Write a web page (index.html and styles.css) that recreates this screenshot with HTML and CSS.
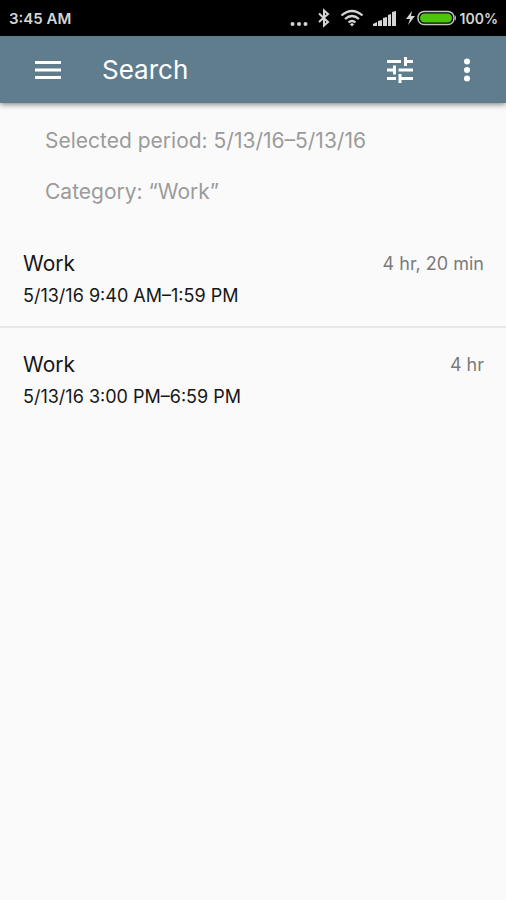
FILE: index.html
```html
<!DOCTYPE html>
<html lang="en">
<head>
<meta charset="utf-8">
<meta name="viewport" content="width=device-width, initial-scale=1">
<title>Search</title>
<link rel="stylesheet" href="styles.css">
</head>
<body>
<div class="status">
  <time class="clock">3:45 AM</time>
  <div class="indicators">
    <svg class="dots" width="18" height="24" viewBox="0 0 18 24" fill="currentColor"><circle cx="2.5" cy="18" r="2"/><circle cx="9" cy="18" r="2"/><circle cx="15.5" cy="18" r="2"/></svg>
    <svg class="bluetooth" width="14" height="24" viewBox="0 0 14 24" fill="none" stroke="currentColor" stroke-width="2"><path d="M2 7.500l9 8.500-4 3.500V4.500l4 3.500L2 16"/></svg>
    <svg class="wifi" width="24" height="24" viewBox="0 0 24 24" fill="none" stroke="currentColor" stroke-width="2.3"><path d="M1.500 9.500Q12 .5 22.500 9.500M5 13Q12 7 19 13M8.500 16.500Q12 13.500 15.500 16.500"/><path d="M9.800 18.200Q12 16.500 14.200 18.200L12 20.500z" fill="currentColor" stroke="none"/></svg>
    <svg class="signal" width="24" height="24" viewBox="0 0 24 24" fill="currentColor"><path d="M0 20v-2l4-2v4zM5 20v-5l4-1v6zM10 20v-8l4-1v9zM15 20V9l3-1v12zM19 20V6l4-1v15z"/></svg>
    <svg class="battery" width="50" height="24" viewBox="0 0 50 24"><path d="M6 5L0 13h4l-2 6 7-9H5z" fill="#d5d5d5"/><rect x="12" y="5.500" width="36" height="13" rx="6" fill="#050505" stroke="#c4c4c4" stroke-width="1.500"/><path d="M49 9q2 3 0 6z" fill="#c4c4c4"/><rect x="14" y="7.500" width="32" height="9" rx="4.500" fill="#4bc60a"/></svg>
    <span class="percent">100%</span>
  </div>
</div>
<header class="bar">
  <button class="icon" aria-label="Open menu"><svg width="26" height="26" viewBox="0 0 26 26" fill="currentColor"><path d="M0 4h26v3H0zM0 11.500h26v3H0zM0 19h26v3H0z"/></svg></button>
  <h1>Search</h1>
  <button class="icon" aria-label="Filter"><svg width="26" height="26" viewBox="0 0 26 26" fill="currentColor"><path d="M0 3h14v3H0zM17 0h3v3h6v3h-6v3h-3zM0 11.500h6V8.500h3v9H6v-3H0zM11.500 11.500H26v3H11.500zM0 20h9v3H0zM11.500 17h3v3H26v3H14.500v3h-3z"/></svg></button>
  <button class="icon more" aria-label="More options"><svg width="8" height="26" viewBox="0 0 8 26" fill="currentColor"><circle cx="4" cy="4.500" r="3"/><circle cx="4" cy="13" r="3"/><circle cx="4" cy="21.500" r="3"/></svg></button>
</header>
<main>
  <section class="filters">
    <p>Selected period: 5/13/16–5/13/16</p>
    <p>Category: “Work”</p>
  </section>
  <ul class="entries">
    <li><div class="row"><h2>Work</h2><span class="duration">4 hr, 20 min</span></div><p>5/13/16 9:40 AM–1:59 PM</p></li>
    <li><div class="row"><h2>Work</h2><span class="duration">4 hr</span></div><p>5/13/16 3:00 PM–6:59 PM</p></li>
  </ul>
</main>
</body>
</html>
```
FILE: styles.css
```css
* { box-sizing: border-box; }
body { margin: 0; min-height: 100vh; background: #fafafa; color: #161616; font-family: Inter, Roboto, sans-serif; }
h1, h2, p, ul { margin: 0; padding: 0; font-weight: 400; }
svg { display: block; flex: none; }
.status { display: flex; justify-content: space-between; align-items: center; height: 36px; padding: 0 8px 0 9px; background: #000; color: #d5d5d5; font-size: 15px; font-weight: 600; }
.indicators { display: flex; align-items: center; gap: 9px; }
.percent { margin-left: -5px; font-size: 14px; }
.bar { display: flex; align-items: center; height: 67px; padding: 0 35px; background: #607d8d; color: #fff; box-shadow: 0 1px 6px rgba(0, 0, 0, .55); }
.bar h1 { flex: 1; margin-left: 41px; font-size: 26px; line-height: 32px; }
.icon { padding: 0; border: 0; background: none; color: inherit; }
.more { margin-left: 50px; }
.filters { padding: 25px 45px 0; color: #9b9b9b; font-size: 21px; line-height: 26px; }
.filters p + p { margin-top: 25px; }
.entries { margin-top: 22px; list-style: none; }
.entries li { padding: 24px 22px 19px 23px; }
.entries li + li { border-top: 2px solid #e8e8e8; }
.row { display: flex; justify-content: space-between; line-height: 26px; }
.row h2 { font-size: 21px; }
.duration { color: #7a7a7a; font-size: 18px; }
.entries p { margin-top: 8px; font-size: 18px; line-height: 22px; }
```
